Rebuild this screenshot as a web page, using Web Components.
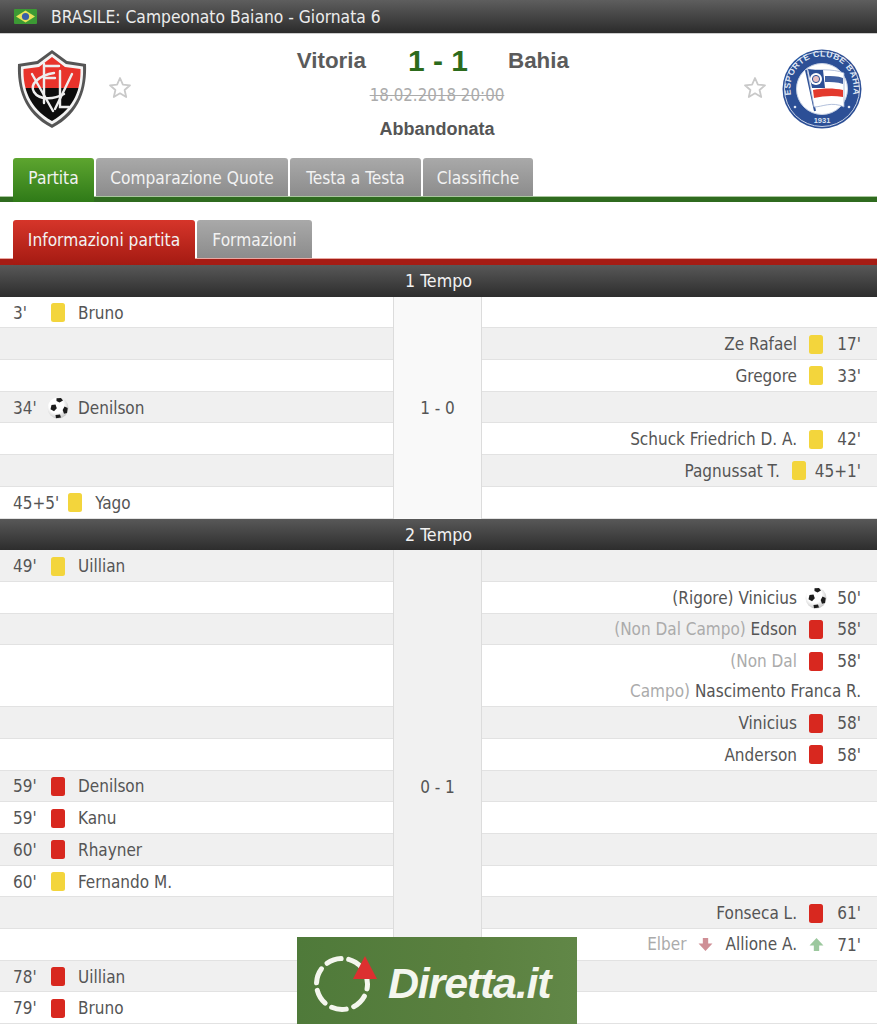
<!DOCTYPE html>
<html lang="it">
<head>
<meta charset="utf-8">
<title>Vitoria - Bahia</title>
<style>
  html, body { margin: 0; height: 1024px; overflow: hidden; background: #fff; }
  body { position: relative; font-family: "DejaVu Sans", Tahoma, sans-serif; font-stretch: condensed; font-size: 17px; color: #555; }
</style>
</head>
<body>
<league-bar>BRASILE: Campeonato Baiano - Giornata 6</league-bar>
<match-head home="Vitoria" away="Bahia" score="1 - 1" date="18.02.2018 20:00" status="Abbandonata"></match-head>
<tab-strip color="green">
  <tab-item active width="81">Partita</tab-item>
  <tab-item width="192">Comparazione Quote</tab-item>
  <tab-item width="131">Testa a Testa</tab-item>
  <tab-item width="110">Classifiche</tab-item>
</tab-strip>
<tab-strip color="red">
  <tab-item active color="red" width="182">Informazioni partita</tab-item>
  <tab-item width="115">Formazioni</tab-item>
</tab-strip>

<period-block title="1 Tempo" score="1 - 0" light>
  <event-row slot="home" minute="3'" icon="yellow">Bruno</event-row>
  <event-row slot="home" alt></event-row>
  <event-row slot="home"></event-row>
  <event-row slot="home" alt minute="34'" icon="ball">Denilson</event-row>
  <event-row slot="home"></event-row>
  <event-row slot="home" alt></event-row>
  <event-row slot="home" minute="45+5'" icon="yellow">Yago</event-row>

  <event-row slot="away" side="away"></event-row>
  <event-row slot="away" side="away" alt minute="17'" icon="yellow">Ze Rafael</event-row>
  <event-row slot="away" side="away" minute="33'" icon="yellow">Gregore</event-row>
  <event-row slot="away" side="away" alt></event-row>
  <event-row slot="away" side="away" minute="42'" icon="yellow">Schuck Friedrich D. A.</event-row>
  <event-row slot="away" side="away" alt minute="45+1'" icon="yellow">Pagnussat T.</event-row>
  <event-row slot="away" side="away"></event-row>
</period-block>

<period-block title="2 Tempo" score="0 - 1">
  <event-row slot="home" alt minute="49'" icon="yellow">Uillian</event-row>
  <event-row slot="home"></event-row>
  <event-row slot="home" alt></event-row>
  <event-row slot="home" tall></event-row>
  <event-row slot="home" alt></event-row>
  <event-row slot="home"></event-row>
  <event-row slot="home" alt minute="59'" icon="red">Denilson</event-row>
  <event-row slot="home" minute="59'" icon="red">Kanu</event-row>
  <event-row slot="home" alt minute="60'" icon="red">Rhayner</event-row>
  <event-row slot="home" minute="60'" icon="yellow">Fernando M.</event-row>
  <event-row slot="home" alt></event-row>
  <event-row slot="home"></event-row>
  <event-row slot="home" alt minute="78'" icon="red">Uillian</event-row>
  <event-row slot="home" minute="79'" icon="red">Bruno</event-row>

  <event-row slot="away" side="away" alt></event-row>
  <event-row slot="away" side="away" minute="50'" icon="ball">(Rigore) Vinicius</event-row>
  <event-row slot="away" side="away" alt minute="58'" icon="red"><muted-note>(Non Dal Campo)</muted-note> Edson</event-row>
  <event-row slot="away" side="away" tall minute="58'" icon="red"><muted-note>(Non Dal</muted-note><span slot="line2"><muted-note>Campo)</muted-note> Nascimento Franca R.</span></event-row>
  <event-row slot="away" side="away" alt minute="58'" icon="red">Vinicius</event-row>
  <event-row slot="away" side="away" minute="58'" icon="red">Anderson</event-row>
  <event-row slot="away" side="away" alt></event-row>
  <event-row slot="away" side="away"></event-row>
  <event-row slot="away" side="away" alt></event-row>
  <event-row slot="away" side="away"></event-row>
  <event-row slot="away" side="away" alt minute="61'" icon="red">Fonseca L.</event-row>
  <event-row slot="away" side="away" minute="71'" icon="up"><muted-note>Elber</muted-note><event-icon kind="down"></event-icon>Allione A.</event-row>
  <event-row slot="away" side="away" alt></event-row>
  <event-row slot="away" side="away"></event-row>
</period-block>

<promo-banner></promo-banner>

<script>
// small helper, every component just sets its shadow html once
class Base extends HTMLElement {
  constructor() {
    super();
    this.attachShadow({ mode: 'open' });
  }
  connectedCallback() {
    this.shadowRoot.innerHTML = this.html();
  }
}

const STAR = `<svg width="24" height="24" viewBox="0 0 24 24"><path d="M12 2l2.900 6.600 7.100.7-5.400 4.700 1.600 7-6.200-3.700-6.200 3.700 1.600-7L2 9.300l7.100-.7z" fill="#fff" stroke="#c9c9c9" stroke-width="1.800" stroke-linejoin="round"/></svg>`;

const VITORIA = `<svg width="70" height="80" viewBox="0 0 70 80">
  <path d="M35 1L50 12 69 15C70 38 64 64 35 79 6 64 0 38 1 15L20 12z" fill="#555"/>
  <path d="M35 4.500L49 15 66 17.500C67 39 61 61 35 75.500 9 61 3 39 4 17.500L21 15z" fill="#f4f4f4"/>
  <clipPath id="sh"><path d="M35 8L48 18 63.500 20C64 39 58 59 35 72 12 59 6 39 6.500 20L22 18z"/></clipPath>
  <g clip-path="url(#sh)">
    <rect width="70" height="39" fill="#e8332b"/>
    <rect y="39" width="70" height="41" fill="#0c0c0c"/>
  </g>
  <g fill="none" stroke="#eee" stroke-width="2.400" stroke-linecap="round">
    <path d="M27 15V54M27 17H42M27 29H38"/>
    <path d="M15 25L36 62"/>
    <path d="M55 25L38 60"/>
    <path d="M43 22V58H52"/>
    <path d="M37 24C23 26 12 35 17 43 22 51 36 51 47 45"/>
  </g>
</svg>`;

const BAHIA = `<svg width="80" height="80" viewBox="0 0 80 80">
  <circle cx="40" cy="40" r="39.500" fill="#2c4f96"/>
  <circle cx="40" cy="40" r="37.500" fill="none" stroke="#c9d3e6" stroke-width="1"/>
  <circle cx="40" cy="40" r="25.500" fill="#fff" stroke="#c9d3e6" stroke-width="1"/>
  <path id="ring" d="M9.500 47A31.500 31.500 0 1 1 70.500 47" fill="none"/>
  <text font-family="Liberation Sans, sans-serif" font-size="8.600" font-weight="700" fill="#dfe6f3" letter-spacing=".5"><textPath href="#ring" startOffset="50%" text-anchor="middle">ESPORTE CLUBE BAHIA</textPath></text>
  <text x="40" y="74" text-anchor="middle" font-family="Liberation Sans, sans-serif" font-size="7.500" font-weight="700" fill="#dfe6f3">1931</text>
  <circle cx="13" cy="58" r="1.300" fill="#dfe6f3"/><circle cx="67" cy="58" r="1.300" fill="#dfe6f3"/>
  <path d="M24 21L33 62" stroke="#2c4f96" stroke-width="2"/>
  <path d="M25 20C36 22 50 19 62 24V58C50 52 40 58 32 58z" fill="#fff" stroke="#9fb0d2" stroke-width=".8"/>
  <path d="M26 20C30 21 35 21 41 21L43 39 30 39z" fill="#2c4f96"/>
  <circle cx="34" cy="30" r="6" fill="#fff"/>
  <circle cx="34" cy="30" r="3.600" fill="#e9bfc0" stroke="#2c4f96"/>
  <path d="M43 27C49 27 56 27 61 29V35C55 33 49 33 43 33z" fill="#2c4f96" opacity=".9"/>
  <path d="M31 41C41 39 52 39 61 41V48C51 46 41 47 32 49z" fill="#e33a2e"/>
</svg>`;

customElements.define('league-bar', class extends Base {
  html() {
    return `<style>
      :host { display: flex; align-items: center; gap: 14px; height: 33px; padding-left: 14px; color: #ececec; background: linear-gradient(#5e5e5e, #2b2b2b); border-bottom: 1px solid #ccc; font-size: 17.300px; }
      svg { display: block; }
    </style>
    <svg width="23" height="15" viewBox="0 0 23 15"><rect width="23" height="15" rx="1" fill="#3c9a34"/><path d="M11.500 1.500L21 7.500 11.500 13.500 2 7.500z" fill="#e8e25a"/><circle cx="11.500" cy="7.500" r="3.600" fill="#3a5fa8"/></svg>
    <slot></slot>`;
  }
});

customElements.define('match-head', class extends Base {
  html() {
    const a = n => this.getAttribute(n);
    return `<style>
      :host { display: block; height: 124px; }
      .wrap { display: grid; grid-template-columns: 279px 316px 1fr; height: 100%; }
      .team { display: flex; align-items: flex-start; padding-top: 15px; }
      .team.home { padding-left: 17px; gap: 21px; }
      .team.away { justify-content: flex-end; padding-right: 15px; gap: 15px; }
      .team svg { display: block; flex: none; }
      .team .star { margin-top: 27px; }
      .mid { display: flex; flex-direction: column; align-items: center; padding-top: 6px; }
      .line { display: flex; align-items: center; height: 42px; justify-content: center; font-family: "Liberation Sans", Arial, sans-serif; font-weight: 700; white-space: nowrap; }
      .name { font-size: 22.400px; color: #5b5b5b; width: 129px; box-sizing: border-box; }
      .name.h { text-align: right; padding-right: 42px; }
      .name.a { text-align: left; padding-left: 42px; }
      .score { font-size: 30px; color: #2c6b1c; width: 58px; text-align: center; }
      .date { font-size: 16.800px; color: #ababab; text-decoration: line-through; margin-top: 3px; }
      .status { font-family: "Liberation Sans", Arial, sans-serif; font-weight: 700; font-size: 18px; color: #555; margin-top: 14px; }
    </style>
    <div class="wrap">
      <div class="team home">${VITORIA}<span class="star">${STAR}</span></div>
      <div class="mid">
        <div class="line"><span class="name h">${a('home')}</span><span class="score">${a('score')}</span><span class="name a">${a('away')}</span></div>
        <div class="date">${a('date')}</div>
        <div class="status">${a('status')}</div>
      </div>
      <div class="team away"><span class="star">${STAR}</span>${BAHIA}</div>
    </div>`;
  }
});

customElements.define('tab-strip', class extends Base {
  html() {
    const red = this.getAttribute('color') === 'red';
    return `<style>
      :host { display: block; margin-top: ${red ? 18 : 0}px; }
      .tabs { display: flex; gap: 2px; padding-left: 13px; height: 38px; }
      .line { height: ${red ? 7 : 6}px; background: ${red ? '#a51c14' : '#2f6b1f'}; border-top: 1px solid ${red ? '#e9a8a2' : '#a9c79e'}; box-sizing: border-box; }
    </style>
    <div class="tabs"><slot></slot></div>
    <div class="line"></div>`;
  }
});

customElements.define('tab-item', class extends Base {
  html() {
    const red = this.getAttribute('color') === 'red';
    const bg = red
      ? 'linear-gradient(#d6352a, #a41a12)'
      : 'linear-gradient(#5da52f, #2f7a18)';
    return `<style>
      :host { display: block; height: 38px; width: ${this.getAttribute('width')}px; text-align: center; box-sizing: border-box; line-height: 40px; font-size: 17.200px; color: #f2f2f2; background: linear-gradient(#a9a9a9, #8c8c8c); border-radius: 3px 3px 0 0; white-space: nowrap; }
      :host([active]) { background: ${bg}; height: ${red ? 45 : 44}px; position: relative; z-index: 1; }
    </style><slot></slot>`;
  }
});

customElements.define('period-block', class extends Base {
  html() {
    return `<style>
      :host { display: block; }
      .title { height: 31.700px; padding-top: 1px; box-sizing: border-box; display: flex; align-items: center; justify-content: center; font-size: 17.700px; color: #f2f2f2; background: linear-gradient(#585858, #2d2d2d); }
      .body { display: grid; grid-template-columns: 393px 89px 1fr; }
      .col { display: flex; flex-direction: column; min-width: 0; }
      .score { display: flex; align-items: center; justify-content: center; background: #f1f1f1; border-left: 1px solid #dcdcdc; border-right: 1px solid #dcdcdc; box-sizing: border-box; color: #555; }
      :host([light]) .score { background: #f9f9f9; }
    </style>
    <div class="title">${this.getAttribute('title')}</div>
    <div class="body">
      <div class="col"><slot name="home"></slot></div>
      <div class="score">${this.getAttribute('score')}</div>
      <div class="col"><slot name="away"></slot></div>
    </div>`;
  }
});

customElements.define('event-row', class extends Base {
  html() {
    const min = this.getAttribute('minute');
    const icon = this.getAttribute('icon');
    const head = min ? `<span class="min">${min}</span><event-icon class="ic" kind="${icon}"></event-icon>` : '';
    return `<style>
      :host { display: block; height: 31.700px; box-sizing: border-box; background: #fff; border-bottom: 1px solid #e2e2e2; color: #555; white-space: nowrap; }
      :host([alt]) { background: #f0f0f0; }
      :host([tall]) { height: 62px; }
      .main { display: flex; align-items: center; height: 30.700px; box-sizing: border-box; padding: 1px 0 0 13px; }
      :host([side="away"]) .main { flex-direction: row-reverse; padding: 1px 16px 0 0; }
      .min { min-width: 29px; }
      :host([side="away"]) .min { text-align: right; }
      .ic { margin: 0 9px 0 5px; }
      :host([side="away"]) .ic { margin: 0 5px 0 8px; }
      .line2 { display: flex; justify-content: flex-end; align-items: center; height: 30px; padding: 1px 16px 0 0; box-sizing: border-box; }
    </style>
    <div class="main">${head}<span><slot></slot></span></div>
    ${this.hasAttribute('tall') && min ? `<div class="line2"><slot name="line2"></slot></div>` : ''}`;
  }
});

customElements.define('muted-note', class extends Base {
  html() {
    return `<style>:host { display: inline; color: #ababab; }</style><slot></slot>`;
  }
});

customElements.define('event-icon', class extends Base {
  html() {
    const kind = this.getAttribute('kind');
    let body = '';
    if (kind === 'yellow' || kind === 'red') {
      const c = kind === 'red' ? '#d8281f' : '#f3d53c';
      body = `<span style="display:block;width:14px;height:19px;border-radius:2.500px;background:${c}"></span>`;
    } else if (kind === 'ball') {
      body = `<svg width="22" height="22" viewBox="0 0 22 22" style="display:block">
        <defs>
          <radialGradient id="b" cx=".42" cy=".38" r=".7"><stop offset=".5" stop-color="#fff"/><stop offset="1" stop-color="#b9b9b9"/></radialGradient>
          <filter id="s" x="-20%" y="-20%" width="140%" height="140%"><feGaussianBlur stdDeviation=".5"/></filter>
        </defs>
        <circle cx="11" cy="11" r="10.500" fill="url(#b)"/>
        <g fill="#1c1c1c" filter="url(#s)">
          <path d="M9.500 1.300l4.500-.2 2 2.500-3.500 2-3-1.500z"/>
          <path d="M4.500 8l4-.5 1.300 3.800-2.800 3-3.500-2z"/>
          <path d="M17.500 9.500l3.200 1.500-.7 5-3 .8-1.300-3.800z"/>
          <path d="M8.500 18l4.500-.5 1 3-5 .8z"/>
        </g>
      </svg>`;
    } else if (kind === 'up' || kind === 'down') {
      const c = kind === 'up' ? '#9cc89e' : '#cf8f96';
      const t = kind === 'down' ? 'transform:rotate(180deg);' : '';
      body = `<svg width="15" height="15" viewBox="0 0 14 14" style="display:block;${t}"><path d="M7 1l6.500 7H9.500v5h-5V8H.5z" fill="${c}"/></svg>`;
    }
    return `<style>
      :host { display: inline-flex; width: 22px; height: 22px; align-items: center; justify-content: center; vertical-align: middle; }
      :host(:not(.ic)) { margin: -2px 12px 0 12px; width: 15px; }
    </style>${body}`;
  }
});

customElements.define('promo-banner', class extends Base {
  html() {
    return `<style>
      :host { position: absolute; left: 297px; top: 937px; width: 280px; height: 87px; background: linear-gradient(90deg, #4f7a3a, #5a803f 60%, #618747); display: flex; align-items: center; gap: 11px; padding-left: 16px; box-sizing: border-box; }
      svg { display: block; flex: none; margin-top: 7px; }
      span { font-family: "Liberation Sans", Arial, sans-serif; font-style: italic; font-weight: 700; font-size: 43px; letter-spacing: -1.200px; color: #f4f6ee; margin-top: 6px; }
    </style>
    <svg width="64" height="58" viewBox="0 0 64 58">
      <circle cx="29" cy="29" r="25.500" fill="none" stroke="#f4f6ee" stroke-width="5" stroke-dasharray="15 7.700" stroke-dashoffset="10" stroke-linecap="round"/>
      <path d="M52 1l12 23H40z" fill="#dc3030"/>
    </svg>
    <span>Diretta.it</span>`;
  }
});
</script>
</body>
</html>
